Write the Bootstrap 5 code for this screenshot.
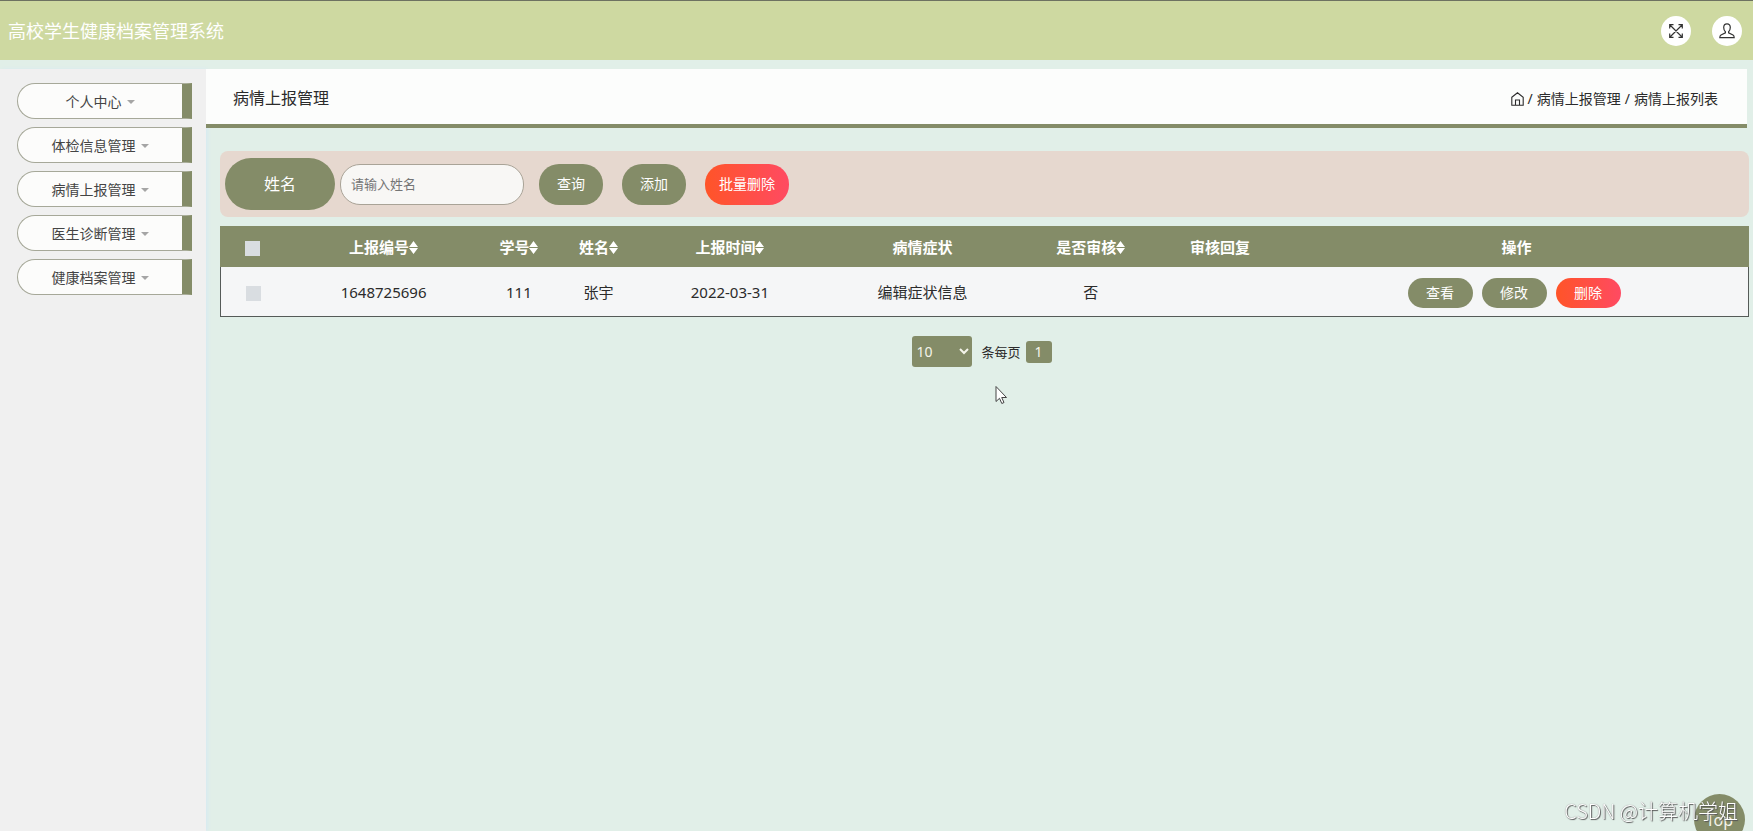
<!DOCTYPE html>
<html lang="zh-CN">
<head>
<meta charset="utf-8">
<meta name="viewport" content="width=device-width, initial-scale=1">
<title>高校学生健康档案管理系统</title>
<link href="https://cdn.jsdelivr.net/npm/bootstrap@5.3.0/dist/css/bootstrap.min.css" rel="stylesheet">
<style>
:root { --olive: #848c68; --mint: #e1efe8; }
body { background: var(--mint); color: #2b2b2b; font-family: "Noto Sans", "Noto Sans CJK SC", sans-serif; font-size: 14px; line-height: 20px; }
button, input, select { font-family: inherit; }
.topbar { background: #ced9a1; border-top: 1px solid #6d7261; height: 60px; padding: 0 11px 0 8px; }
.topbar .navbar-brand { font-size: 18px; color: #fff; }
.top-tools { gap: 21px; }
.round-btn { width: 30px; height: 30px; background: #fff; color: #333; }
.page-body { margin-top: 9px; }
.sidebar { width: 206px; background: #f0f0f0; padding: 14px 14px 0 17px; box-shadow: 2px 0 3px #d8eaf1; }
.side-item { height: 36px; color: #444; background: #fcfcfb; border: 1px solid #a6a899; border-right: 10px solid var(--olive); border-radius: 18px 0 0 18px; font-size: 14px; }
.side-item::after { color: #a5a5a5; border-top-width: 4px; border-left-width: 4px; border-right-width: 4px; margin-left: 5px; vertical-align: 3px; }
.page-head { background: #fcfdfc; border-bottom: 4px solid var(--olive); height: 59px; padding: 4px 29px 0 27px; margin-right: 6px; position: relative; }
.page-head h1 { font-size: 16px; font-weight: 400; }
.page-head a { color: inherit; }
.content-area { padding: 23px 4px 0 14px; }
.filter-bar { background: #e6d8cf; border-radius: 8px; padding: 7px 5px; margin-bottom: 9px; }
.filter-label { width: 110px; height: 52px; border-radius: 26px; background: var(--olive); color: #fff; font-size: 16px; }
.filter-input { width: 184px; height: 41px; border-radius: 20px; border: 1px solid #a9a397; background: #f8f7f5; padding: 0 10px; font-size: 13px; margin: 0 15px 0 5px; }
.filter-input::placeholder { color: #757575; }
.filter-actions { gap: 19px; }
.pill { border: 0; border-radius: 20px; color: #fff; background: var(--olive); font-size: 14px; line-height: 20px; }
.pill-red { background: linear-gradient(90deg, #ff5428, #ff4a62); }
.filter-bar .pill { height: 41px; padding: 0 18px; }
.filter-bar .pill-red { padding: 0 14px; }
.data-grid { table-layout: fixed; font-size: 15px; text-align: center; border-collapse: separate; border-spacing: 0; }
.data-grid th { background: var(--olive); color: #fff; height: 41px; padding: 0; font-weight: 700; white-space: nowrap; }
.data-grid td { background: #f5f6f7; height: 50px; padding: 0; border-bottom: 1px solid #555b58; white-space: nowrap; }
.data-grid td:first-child { border-left: 1px solid #555b58; }
.data-grid td:last-child { border-right: 1px solid #555b58; }
.col-check { width: 4.3%; } .col-id { width: 12.8%; } .col-no { width: 4.9%; } .col-name { width: 5.5%; } .col-time { width: 11.7%; }
.col-symptom { width: 13.5%; } .col-audit { width: 8.5%; } .col-reply { width: 8.4%; } .col-ops { width: 30.4%; }
.tick { appearance: none; width: 15px; height: 15px; background: #d9dde1; vertical-align: middle; margin: 0; }
.sort-mark { width: 9px; height: 13px; vertical-align: -1px; }
.row-actions { gap: 9px; padding: 2px 4px 0 0; }
.data-grid .pill { width: 65px; height: 30px; padding: 0; }
.pager { margin-top: 19px; gap: 5px; padding-right: 5px; }
.pager label { font-size: 13px; }
.page-size { width: 60px; height: 31px; border: 0; border-radius: 3px; background: var(--olive); color: #f4f4ea; font-size: 14px; margin-right: 4px; }
.page-num { width: 26px; height: 22px; border: 0; border-radius: 3px; background: var(--olive); color: #f4f4ea; padding: 0; font-size: 14px; }
.pointer-mark { position: absolute; left: 995px; top: 385px; }
.to-top { position: fixed; right: 8px; bottom: -14px; width: 51px; height: 51px; background: var(--olive); color: #f4f4ea; font-size: 16px; text-decoration: none; }
.watermark { position: fixed; right: 15px; bottom: 6px; font: 300 20px/28px "Noto Sans CJK SC", sans-serif; color: #fff; text-shadow: 1px 1px 1px #555, 0 0 1px #777; white-space: nowrap; }
</style>
</head>
<body class="min-vh-100 d-flex flex-column overflow-hidden">
<nav class="topbar navbar flex-nowrap">
  <a class="navbar-brand p-0 m-0" href="#">高校学生健康档案管理系统</a>
  <div class="top-tools d-flex">
    <button class="round-btn btn p-0 border-0 rounded-circle d-flex align-items-center justify-content-center" type="button" aria-label="全屏">
      <svg width="14" height="14" viewBox="0 0 14 14" fill="none" stroke="currentColor" stroke-width="1.2"><path d="M1 1l12 12M13 1L1 13M.7 4.500V.7h3.800M9.500.7h3.800v3.800M13.300 9.500v3.800H9.500M4.500 13.300H.7V9.500"/></svg>
    </button>
    <button class="round-btn btn p-0 border-0 rounded-circle d-flex align-items-center justify-content-center" type="button" aria-label="用户">
      <svg width="16" height="16" viewBox="0 0 16 16" fill="none" stroke="currentColor" stroke-width="1.2"><path d="M8 .8c-2.200 0-3.300 1.500-3.300 3.700 0 1.900.7 3.300 1.700 4.200v1.200L2 12c-.8.500-1.200 1.500-1.200 2.700h14.400c0-1.200-.4-2.200-1.200-2.700l-4.400-2.100V8.700c1-.9 1.700-2.300 1.700-4.200C11.300 2.300 10.200.8 8 .8z"/></svg>
    </button>
  </div>
</nav>

<div class="page-body d-flex flex-grow-1">
  <aside class="sidebar flex-shrink-0 d-flex flex-column gap-2">
    <button class="side-item btn dropdown-toggle p-0" type="button">个人中心</button>
    <button class="side-item btn dropdown-toggle p-0" type="button">体检信息管理</button>
    <button class="side-item btn dropdown-toggle p-0" type="button">病情上报管理</button>
    <button class="side-item btn dropdown-toggle p-0" type="button">医生诊断管理</button>
    <button class="side-item btn dropdown-toggle p-0" type="button">健康档案管理</button>
  </aside>

  <main class="flex-grow-1">
    <header class="page-head d-flex align-items-center justify-content-between">
      <h1 class="m-0">病情上报管理</h1>
      <nav class="d-flex align-items-center gap-1" aria-label="面包屑">
        <a class="d-flex" href="#" aria-label="首页"><svg width="13" height="14" viewBox="0 0 13 14" fill="none" stroke="currentColor" stroke-width="1.1"><path d="M.8 5.200L6.500.8l5.700 4.400v8H.8zM4.500 13.200V8h4v5.200"/></svg></a>
        <span>/</span><a class="text-decoration-none" href="#">病情上报管理</a><span>/</span><span>病情上报列表</span>
      </nav>
    </header>

    <div class="content-area">
      <form class="filter-bar d-flex align-items-center">
        <label class="filter-label d-flex align-items-center justify-content-center" for="nameBox">姓名</label>
        <input class="filter-input" id="nameBox" type="text" placeholder="请输入姓名">
        <div class="filter-actions d-flex">
          <button class="pill btn" type="button">查询</button>
          <button class="pill btn" type="button">添加</button>
          <button class="pill pill-red btn" type="button">批量删除</button>
        </div>
      </form>

      <table class="data-grid w-100">
        <colgroup><col class="col-check"><col class="col-id"><col class="col-no"><col class="col-name"><col class="col-time"><col class="col-symptom"><col class="col-audit"><col class="col-reply"><col class="col-ops"></colgroup>
        <thead>
          <tr>
            <th><input class="tick" type="checkbox" aria-label="全选"></th>
            <th>上报编号<svg class="sort-mark" viewBox="0 0 9 13" fill="currentColor"><path d="M4.500 0L9 6H0zM0 7h9l-4.500 6z"/></svg></th>
            <th>学号<svg class="sort-mark" viewBox="0 0 9 13" fill="currentColor"><path d="M4.500 0L9 6H0zM0 7h9l-4.500 6z"/></svg></th>
            <th>姓名<svg class="sort-mark" viewBox="0 0 9 13" fill="currentColor"><path d="M4.500 0L9 6H0zM0 7h9l-4.500 6z"/></svg></th>
            <th>上报时间<svg class="sort-mark" viewBox="0 0 9 13" fill="currentColor"><path d="M4.500 0L9 6H0zM0 7h9l-4.500 6z"/></svg></th>
            <th>病情症状</th>
            <th>是否审核<svg class="sort-mark" viewBox="0 0 9 13" fill="currentColor"><path d="M4.500 0L9 6H0zM0 7h9l-4.500 6z"/></svg></th>
            <th>审核回复</th>
            <th>操作</th>
          </tr>
        </thead>
        <tbody>
          <tr>
            <td><input class="tick" type="checkbox" aria-label="选择 1648725696"></td>
            <td>1648725696</td>
            <td>111</td>
            <td>张宇</td>
            <td>2022-03-31</td>
            <td>编辑症状信息</td>
            <td>否</td>
            <td></td>
            <td>
              <div class="row-actions d-flex justify-content-center">
                <button class="pill btn" type="button">查看</button>
                <button class="pill btn" type="button">修改</button>
                <button class="pill pill-red btn" type="button">删除</button>
              </div>
            </td>
          </tr>
        </tbody>
      </table>

      <div class="pager d-flex align-items-center justify-content-center">
        <select class="page-size" id="pageSize"><option>10</option><option>25</option><option>50</option></select>
        <label for="pageSize">条每页</label>
        <button class="page-num" type="button">1</button>
      </div>
    </div>
  </main>
</div>

<svg class="pointer-mark" width="13" height="20" viewBox="0 0 13 20" fill="#fff" stroke="#444" stroke-width="1"><path d="M1 1.500v15l3.500-3.200 2.300 5.200 2.200-1-2.300-5H11.500z"/></svg>
<a class="to-top rounded-circle d-flex align-items-center justify-content-center" href="#">Top</a>
<div class="watermark">CSDN @计算机学姐</div>
<script src="https://cdn.jsdelivr.net/npm/bootstrap@5.3.0/dist/js/bootstrap.bundle.min.js"></script>
</body>
</html>
